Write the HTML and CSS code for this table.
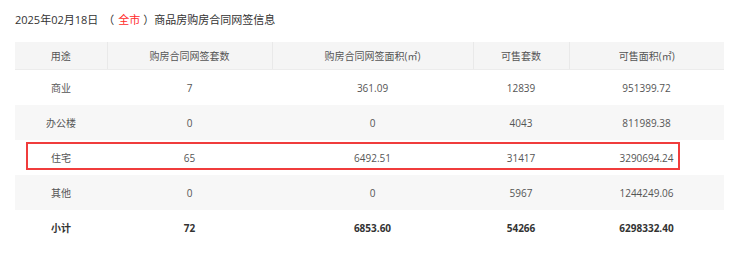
FILE: index.html
```html
<!DOCTYPE html>
<html lang="zh-CN">
<head>
<meta charset="utf-8">
<title>商品房购房合同网签信息</title>
<link rel="stylesheet" href="styles.css">
</head>
<body>
<div class="page">
  <div class="title">
    <span class="date">2025年02月18日</span><span class="area">（<span class="city">全市</span>）</span><span>商品房购房合同网签信息</span>
  </div>
  <div class="table-wrap">
    <table class="data">
      <colgroup>
        <col class="c1"><col class="c2"><col class="c3"><col class="c4"><col class="c5">
      </colgroup>
      <thead>
        <tr>
          <th>用途</th>
          <th>购房合同网签套数</th>
          <th>购房合同网签面积(㎡)</th>
          <th>可售套数</th>
          <th>可售面积(㎡)</th>
        </tr>
      </thead>
      <tbody>
        <tr><td>商业</td><td>7</td><td>361.09</td><td>12839</td><td>951399.72</td></tr>
        <tr class="alt"><td>办公楼</td><td>0</td><td>0</td><td>4043</td><td>811989.38</td></tr>
        <tr><td>住宅</td><td>65</td><td>6492.51</td><td>31417</td><td>3290694.24</td></tr>
        <tr class="alt"><td>其他</td><td>0</td><td>0</td><td>5967</td><td>1244249.06</td></tr>
        <tr class="total"><td>小计</td><td>72</td><td>6853.60</td><td>54266</td><td>6298332.40</td></tr>
      </tbody>
    </table>
    <div class="highlight"></div>
  </div>
</div>
</body>
</html>
```

FILE: styles.css
```css
html, body {
  margin: 0;
  padding: 0;
  background: #ffffff;
}
body {
  font-family: "Open Sans", "Noto Sans CJK SC", sans-serif;
  color: #555555;
}
.page {
  padding: 12px 16px 0 15px;
}
.title {
  font-size: 11px;
  line-height: 16px;
  color: #333333;
  height: 16px;
  margin-bottom: 14px;
  white-space: nowrap;
}
.date {
  margin-right: 5px;
}
.city {
  color: #ff2a2a;
  padding: 0 3px 0 4px;
}
.table-wrap {
  position: relative;
  width: 709px;
}
.data {
  width: 709px;
  border-collapse: collapse;
  table-layout: fixed;
  font-size: 10px;
}
.c1 { width: 92px; }
.c2 { width: 165px; }
.c3 { width: 201px; }
.c4 { width: 96px; }
.c5 { width: 155px; }
.data th {
  height: 27px;
  padding: 0;
  font-weight: normal;
  background: #f5f5f5;
  border-right: 1px solid #e9e9e9;
  border-bottom: 1px solid #ececec;
  text-align: center;
  color: #555555;
}
.data th:last-child {
  border-right: none;
}
.data td {
  height: 35px;
  padding: 0;
  text-align: center;
}
.data tr.alt td {
  background: #f7f7f7;
}
.data tr.total td {
  font-weight: bold;
  color: #333333;
}
.highlight {
  position: absolute;
  left: 11px;
  top: 100px;
  width: 650px;
  height: 24px;
  border: 2px solid #f03c3c;
  pointer-events: none;
}
```
